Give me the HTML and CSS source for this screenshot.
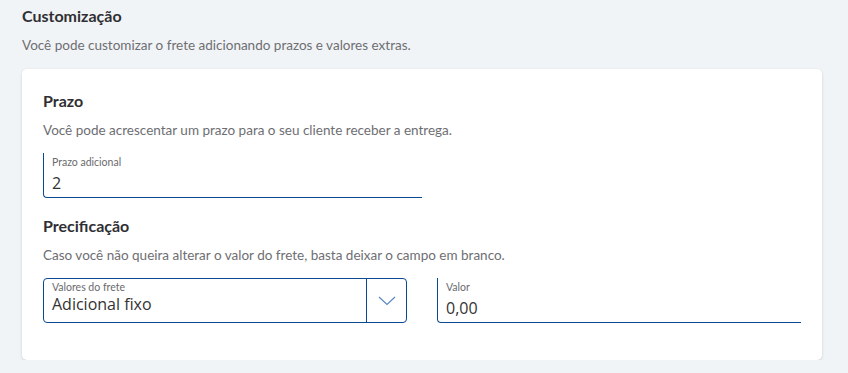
FILE: index.html
```
<!DOCTYPE html>
<html lang="pt-BR">
<head>
<meta charset="utf-8">
<link rel="stylesheet" href="styles.css">
</head>
<body>
<section class="page">
  <h2 class="title">Customização</h2>
  <p class="subtitle">Você pode customizar o frete adicionando prazos e valores extras.</p>
  <div class="card">
    <h3 class="heading">Prazo</h3>
    <p class="desc">Você pode acrescentar um prazo para o seu cliente receber a entrega.</p>
    <div class="half">
      <div class="field">
        <span class="label">Prazo adicional</span>
        <span class="value">2</span>
      </div>
    </div>
    <h3 class="heading heading-gap">Precificação</h3>
    <p class="desc">Caso você não queira alterar o valor do frete, basta deixar o campo em branco.</p>
    <div class="row">
      <div class="select">
        <div class="select-main">
          <span class="label">Valores do frete</span>
          <span class="value">Adicional fixo</span>
        </div>
        <div class="select-btn">
          <svg width="18" height="10" viewBox="0 0 18 10"><polyline points="1,1 9,8.5 17,1" fill="none" stroke="#5a87c3" stroke-width="1.2"/></svg>
        </div>
      </div>
      <div class="field">
        <span class="label">Valor</span>
        <span class="value">0,00</span>
      </div>
    </div>
  </div>
</section>
</body>
</html>
```
FILE: styles.css
```
html, body {
  margin: 0;
  padding: 0;
  background: #f1f4f7;
}
body {
  font-family: Lato, "Open Sans", sans-serif;
  color: #333;
}
.page {
  padding: 5px 26px 0 22px;
}
.title {
  margin: 0;
  font-size: 16px;
  line-height: 22px;
  font-weight: 700;
  color: #2f2f33;
}
.subtitle {
  margin: 8px 0 0;
  font-size: 13.5px;
  line-height: 20px;
  color: #6e6e72;
}
.card {
  margin-top: 14px;
  background: #fff;
  border-radius: 5px;
  box-shadow: 0 1px 3px rgba(0,0,0,0.15);
  padding: 21px 21px 37px;
}
.heading {
  margin: 0;
  font-size: 16px;
  line-height: 22px;
  font-weight: 700;
  color: #2f2f33;
}
.heading-gap {
  margin-top: 17px;
}
.desc {
  margin: 8px 0 0;
  font-size: 13.5px;
  line-height: 20px;
  color: #6e6e72;
}
.half {
  width: 50%;
  margin-top: 13px;
}
.field {
  box-sizing: border-box;
  height: 45px;
  border-left: 1px solid #0b4a91;
  border-bottom: 1.5px solid #0b4a91;
  border-bottom-left-radius: 4px;
  padding: 3px 8px 0;
  display: flex;
  flex-direction: column;
}
.label {
  font-family: Lato, sans-serif;
  font-size: 10.5px;
  line-height: 12px;
  color: #6a6a6e;
}
.value {
  font-family: "Open Sans", sans-serif;
  font-size: 16px;
  line-height: 22px;
  color: #333;
  margin-top: 4px;
}
.row {
  margin-top: 13px;
  display: grid;
  grid-template-columns: 1fr 1fr;
  column-gap: 30px;
}
.select {
  box-sizing: border-box;
  height: 45px;
  border: 1px solid #0b4a91;
  border-radius: 4px;
  display: flex;
}
.select-main {
  flex: 1;
  display: flex;
  flex-direction: column;
  padding: 2px 8px 0;
}
.select-main .value {
  margin-top: 0;
  font-size: 16px;
}
.select-btn {
  width: 39px;
  border-left: 1px solid #0b4a91;
  display: flex;
  align-items: center;
  justify-content: center;
}
```
